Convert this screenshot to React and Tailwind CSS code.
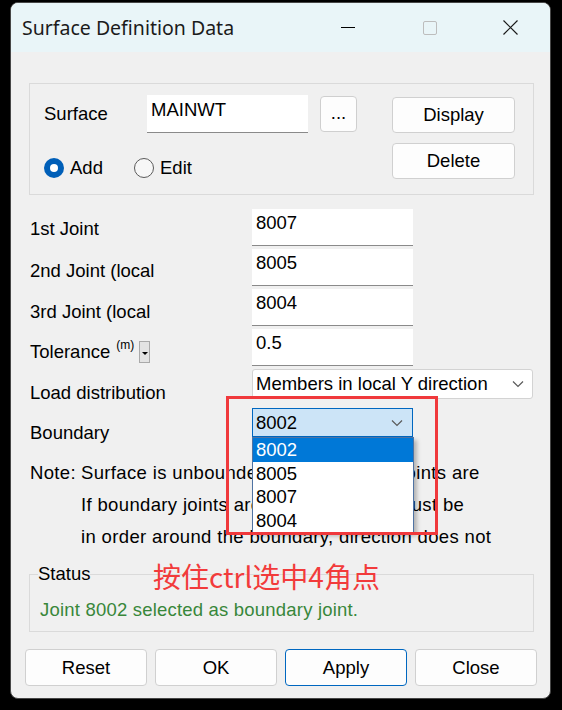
const Chevron = () => (
  <svg width="12" height="8" viewBox="0 0 12 8" className="shrink-0">
    <polyline points="1,1.5 6,6.5 11,1.5" fill="none" stroke="#5a5a5a" strokeWidth="1.2" />
  </svg>
);

const Btn = ({ children, className = "" }) => (
  <div
    className={
      "flex items-center justify-center rounded-[4px] border bg-[#fdfdfd] text-[18.5px] text-black " +
      className
    }
  >
    {children}
  </div>
);

const Field = ({ children }) => (
  <div className="w-[161px] h-[37px] bg-white border-b-[1.5px] border-[#8a8a8a] pl-[4px] pt-[3px] leading-[22px] text-[18.5px]">
    {children}
  </div>
);

export default function App() {
  const sans = { fontFamily: '"Liberation Sans", Arial, sans-serif' };
  return (
    <div className="w-[562px] h-[710px] bg-black pt-[2px] pl-[10px] overflow-hidden" style={sans}>
      <div className="relative w-[541px] h-[697px] rounded-[8px] border border-[#474747] overflow-hidden bg-[#f0f0f0] flex flex-col text-black">
        {/* Title bar */}
        <div className="h-[49px] shrink-0 bg-[#e9f5f8] flex items-center">
          <div
            className="w-[298px] shrink-0 pl-[11px] text-[19.5px] text-[#1b1b1b]"
            style={{ fontFamily: '"Noto Sans", "Open Sans", sans-serif' }}
          >
            Surface Definition Data
          </div>
          <div className="shrink-0 ml-[32px] w-[14px] h-[14px] flex items-center">
            <div className="w-[14px] h-[1.5px] bg-black" />
          </div>
          <div className="shrink-0 ml-[68px] w-[14px] h-[14px] rounded-[2px] border border-[#bdbdbd]" />
          <div className="shrink-0 ml-[66px] w-[15px] h-[15px]">
            <svg width="15" height="15" viewBox="0 0 15 15">
              <path d="M0.5 0.5 L14.5 14.5 M14.5 0.5 L0.5 14.5" stroke="#1b1b1b" strokeWidth="1.2" />
            </svg>
          </div>
        </div>

        {/* Group box */}
        <div className="mt-[31px] ml-[18px] mr-[16px] h-[112px] border border-[#dadada] flex pt-[11px] pl-[14px]">
          <div className="flex flex-col">
            <div className="flex items-center h-[38px]">
              <div className="w-[103px] text-[18.5px]">Surface</div>
              <div className="w-[161px] h-[38px] bg-white border-b-[1.5px] border-[#8a8a8a] pl-[4px] pt-[4px] leading-[22px] text-[18.5px]">
                MAINWT
              </div>
              <Btn className="ml-[12px] w-[37px] h-[36px] border-[#cfcfcf] pb-[2px]">...</Btn>
            </div>
            <div className="flex items-center h-[30px] mt-[20px] text-[18.5px]">
              <div className="flex items-center w-[90px]">
                <div className="w-[20px] h-[20px] rounded-full bg-[#005fb8] flex items-center justify-center">
                  <div className="w-[8px] h-[8px] rounded-full bg-white" />
                </div>
                <span className="ml-[6px]">Add</span>
              </div>
              <div className="flex items-center">
                <div className="w-[20px] h-[20px] rounded-full border border-[#5a5a5a] bg-[#f7f7f7]" />
                <span className="ml-[6px]">Edit</span>
              </div>
            </div>
          </div>
          <div className="ml-[35px] pt-[2px] flex flex-col gap-[10px]">
            <Btn className="w-[123px] h-[36px] border-[#d0d0d0]">Display</Btn>
            <Btn className="w-[123px] h-[36px] border-[#d0d0d0]">Delete</Btn>
          </div>
        </div>

        {/* Rows */}
        <div className="mt-[14px] ml-[19px] flex flex-col text-[18.5px] leading-[22px]">
          <div className="flex h-[40px] items-start">
            <div className="w-[222px] mt-[9px]">1st Joint</div>
            <Field>8007</Field>
          </div>
          <div className="flex h-[40px] items-start">
            <div className="w-[222px] mt-[11px]">2nd Joint (local</div>
            <Field>8005</Field>
          </div>
          <div className="flex h-[40px] items-start">
            <div className="w-[222px] mt-[12px]">3rd Joint (local</div>
            <Field>8004</Field>
          </div>
          <div className="flex h-[40px] items-start">
            <div className="w-[222px] flex items-start">
              <span className="mt-[12px]">Tolerance</span>
              <span className="ml-[6px] mt-[9px] text-[12px] leading-[14px]">(m)</span>
              <div className="ml-[5px] mt-[12px] w-[11px] h-[22px] bg-[#e3e3e3] border border-[#a9a9a9] flex items-end justify-center pb-[7px]">
                <div className="w-0 h-0 border-l-[3px] border-r-[3px] border-t-[3px] border-l-transparent border-r-transparent border-t-black" />
              </div>
            </div>
            <Field>0.5</Field>
          </div>
          <div className="flex h-[39px] items-start">
            <div className="w-[222px] mt-[13px]">Load distribution</div>
            <div className="w-[281px] h-[30px] bg-white border border-[#d3d3d3] rounded-[3px] flex items-center pl-[3px] pr-[8px]">
              <span className="flex-1">Members in local Y direction</span>
              <Chevron />
            </div>
          </div>
          <div className="flex h-[29px] items-start">
            <div className="w-[222px] mt-[14px]">Boundary</div>
            <div className="relative z-10 w-[161px] h-[29px] bg-[#cce4f7] border border-[#0067c0] flex items-center pl-[3px] pr-[9px]">
              <span className="flex-1">8002</span>
              <Chevron />
              <div className="absolute left-[-1px] top-[28px] w-[162px] bg-white border border-[#4f73a3] shadow-[3px_3px_4px_rgba(0,0,0,0.25)] flex flex-col">
                <div className="h-[24px] leading-[24px] bg-[#0078d7] text-white pl-[3px]">8002</div>
                <div className="h-[23px] leading-[23px] pl-[3px]">8005</div>
                <div className="h-[24px] leading-[24px] pl-[3px]">8007</div>
                <div className="h-[23px] leading-[23px] pl-[3px]">8004</div>
              </div>
            </div>
          </div>
        </div>

        {/* Note */}
        <div className="mt-[20px] ml-[19px] flex text-[18.5px] leading-[32px] tracking-[0.35px]">
          <div className="w-[51px]">Note:</div>
          <div className="flex flex-col">
            <div>Surface is unbounded if no boundary joints are</div>
            <div>If boundary joints are specified, they must be</div>
            <div>in order around the boundary, direction does not</div>
          </div>
        </div>

        {/* Status */}
        <fieldset className="mt-[10px] ml-[18px] mr-[16px] h-[69px] border border-[#dadada] pl-[10px] pr-[4px]">
          <legend className="ml-[-2px] px-0 text-[18.5px] leading-[22px]">Status</legend>
          <div className="mt-[14px] text-[18.5px] leading-[22px] text-[#38873a] tracking-[0.2px]">
            Joint 8002 selected as boundary joint.
          </div>
        </fieldset>

        {/* Buttons */}
        <div className="mt-[17px] ml-[14px] flex gap-[8px]">
          <Btn className="w-[122px] h-[37px] border-[#d0d0d0]">Reset</Btn>
          <Btn className="w-[122px] h-[37px] border-[#d0d0d0]">OK</Btn>
          <Btn className="w-[122px] h-[37px] border-[#0067c0]">Apply</Btn>
          <Btn className="w-[122px] h-[37px] border-[#d0d0d0]">Close</Btn>
        </div>

        {/* Red annotation */}
        <div className="absolute left-[215px] top-[393px] w-[212px] h-[139px] border-[3px] border-[#f0393c] z-20 pointer-events-none" />
        <div
          className="absolute left-[142px] top-[556px] text-[28px] leading-[34px] text-[#f23b3b] z-20"
          style={{ fontFamily: '"Noto Sans CJK SC", "Noto Sans", sans-serif' }}
        >
          按住ctrl选中4角点
        </div>
      </div>
    </div>
  );
}
